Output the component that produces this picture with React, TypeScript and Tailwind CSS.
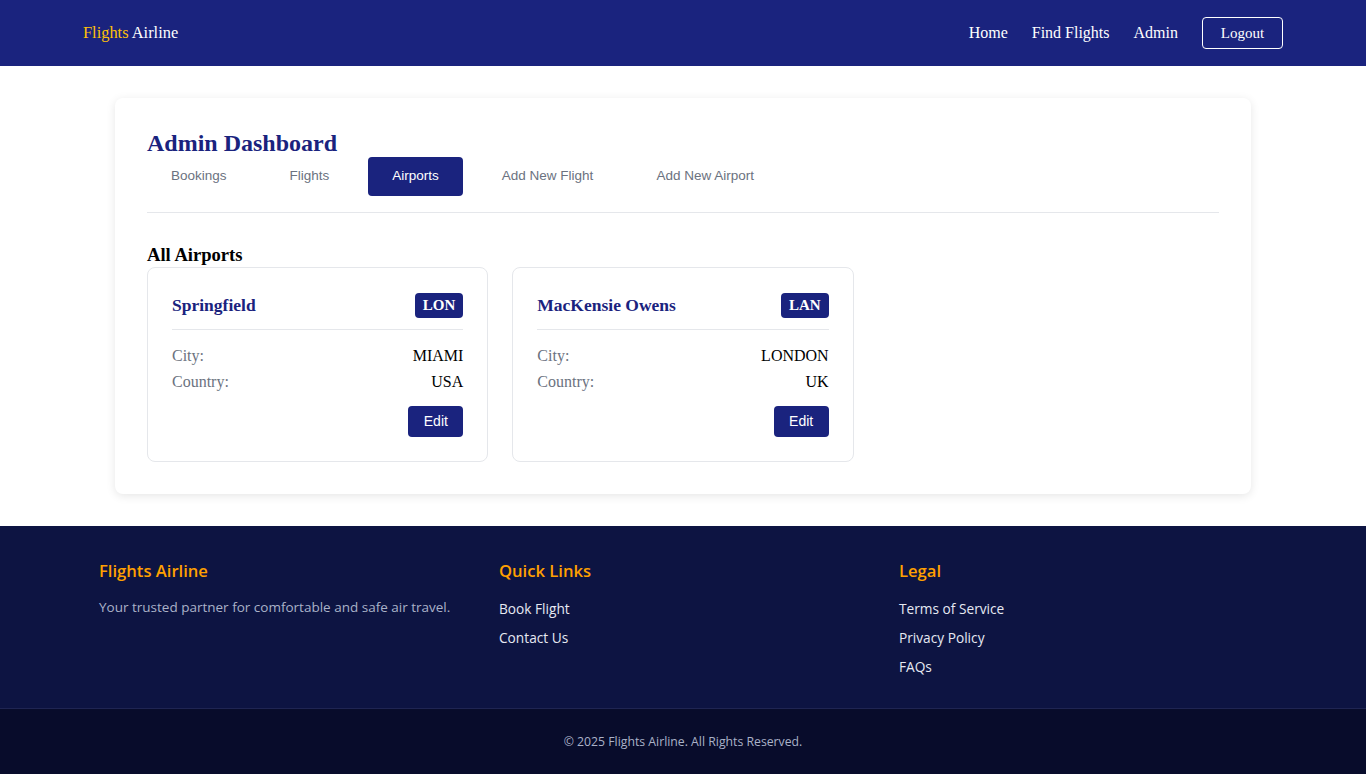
import { useState } from "react";

type Airport = {
  name: string;
  code: string;
  city: string;
  country: string;
};

const airports: Airport[] = [
  { name: "Springfield", code: "LON", city: "MIAMI", country: "USA" },
  { name: "MacKensie Owens", code: "LAN", city: "LONDON", country: "UK" },
];

const tabs = ["Bookings", "Flights", "Airports", "Add New Flight", "Add New Airport"];

const serif = "font-['Liberation_Serif','Times_New_Roman',serif]";
const sans = "font-['Liberation_Sans',Arial,sans-serif]";
const ui = "font-['Open_Sans','Noto_Sans',sans-serif]";

function Header() {
  return (
    <header className={`${serif} h-[66px] bg-[#1a237e] text-white`}>
      <div className="mx-auto flex h-full max-w-[1232px] items-center justify-between px-4">
        <a className="text-[16.4px]">
          <span className="text-[#ffc107]">Flights</span> Airline
        </a>
        <nav className="flex items-center gap-6 text-[16px]">
          <a>Home</a>
          <a>Find Flights</a>
          <a>Admin</a>
          <button className="h-8 w-[81px] rounded border border-white text-[15px]">Logout</button>
        </nav>
      </div>
    </header>
  );
}

function AirportCard({ airport }: { airport: Airport }) {
  return (
    <div className="rounded-lg border border-[#e5e7eb] bg-white p-6">
      <div className="flex items-center justify-between border-b border-[#e5e7eb] pb-[11px]">
        <h4 className={`${serif} text-[17.5px] font-bold leading-[26px] text-[#1a237e]`}>{airport.name}</h4>
        <span className={`${serif} rounded bg-[#1a237e] px-2 py-[3px] text-[15px] font-bold leading-[19px] text-white`}>
          {airport.code}
        </span>
      </div>
      <div className={`${serif} mt-4 flex flex-col gap-[6px] text-[16px] leading-[20px]`}>
        <div className="flex justify-between">
          <span className="text-[#6b7280]">City:</span>
          <span className="text-black">{airport.city}</span>
        </div>
        <div className="flex justify-between">
          <span className="text-[#6b7280]">Country:</span>
          <span className="text-black">{airport.country}</span>
        </div>
      </div>
      <div className="mt-[14px] flex justify-end">
        <button className={`${sans} h-[31px] w-[55px] rounded bg-[#1a237e] text-[14px] text-white`}>Edit</button>
      </div>
    </div>
  );
}

function Dashboard() {
  const [active, setActive] = useState("Airports");
  return (
    <main className="bg-white py-8">
      <div className="mx-auto w-[1136px] rounded-lg bg-white px-8 pt-8 pb-8 shadow-[0_2px_10px_rgba(0,0,0,0.1)]">
        <h2 className={`${serif} text-[24px] font-bold leading-[27px] text-[#1a237e]`}>Admin Dashboard</h2>
        <div className="flex gap-[15px] border-b border-[#e5e7eb] pb-4">
          {tabs.map((t) => (
            <button
              key={t}
              onClick={() => setActive(t)}
              className={`${sans} h-[39px] rounded px-6 text-[13.5px] ${
                active === t ? "bg-[#1a237e] text-white" : "text-[#6b7280]"
              }`}
            >
              {t}
            </button>
          ))}
        </div>
        <h3 className={`${serif} mt-[30px] text-[18.6px] font-bold leading-[24px] text-black`}>All Airports</h3>
        <div className="grid grid-cols-3 gap-6">
          {airports.map((a) => (
            <AirportCard key={a.code} airport={a} />
          ))}
        </div>
      </div>
    </main>
  );
}

function Footer() {
  return (
    <footer className={`${ui} bg-[#0d1442]`}>
      <div className="mx-auto grid max-w-[1200px] grid-cols-3 gap-8 px-4 pt-[32px] pb-[31px]">
        <div>
          <h5 className="text-[16.6px] font-semibold leading-[26px] text-[#ffa000]">Flights Airline</h5>
          <p className="mt-[13px] text-[13.5px] text-[#aab2c8]">Your trusted partner for comfortable and safe air travel.</p>
        </div>
        <div>
          <h5 className="text-[16.6px] font-semibold leading-[26px] text-[#ffa000]">Quick Links</h5>
          <ul className="mt-[15px] flex flex-col gap-[9px] text-[13.7px] leading-[20px] text-[#e6e9f2]">
            <li>Book Flight</li>
            <li>Contact Us</li>
          </ul>
        </div>
        <div>
          <h5 className="text-[16.6px] font-semibold leading-[26px] text-[#ffa000]">Legal</h5>
          <ul className="mt-[15px] flex flex-col gap-[9px] text-[13.7px] leading-[20px] text-[#e6e9f2]">
            <li>Terms of Service</li>
            <li>Privacy Policy</li>
            <li>FAQs</li>
          </ul>
        </div>
      </div>
      <div className="flex h-[68px] items-center justify-center border-t border-[#1f2552] bg-[#080c2b] text-[12.25px] text-[#aab2c8]">
        © 2025 Flights Airline. All Rights Reserved.
      </div>
    </footer>
  );
}

export default function App() {
  return (
    <div className="min-h-screen bg-white">
      <Header />
      <Dashboard />
      <Footer />
    </div>
  );
}
